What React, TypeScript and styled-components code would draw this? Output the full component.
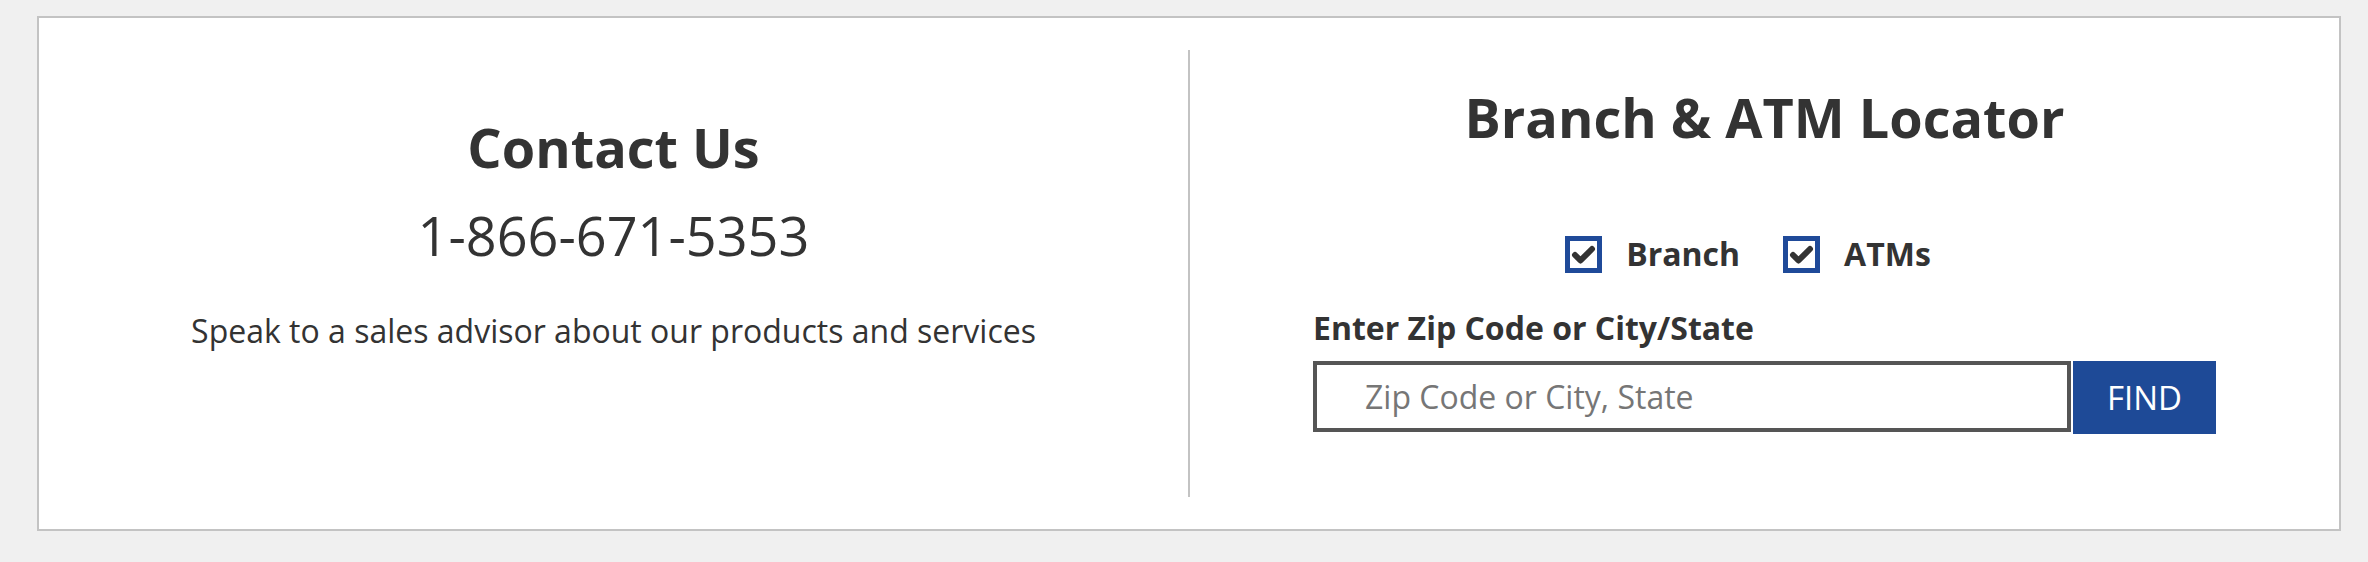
import React from 'react';
import styled, { createGlobalStyle } from 'styled-components';

const GlobalStyle = createGlobalStyle`
  body {
    margin: 0;
    background: #f0f0f0;
    font-family: 'Open Sans', 'Liberation Sans', sans-serif;
    color: #333;
  }
`;

const Page = styled.div`
  padding: 16px 27px 0 37px;
`;

const Card = styled.section`
  display: grid;
  grid-template-columns: 1fr 2px 1fr;
  height: 515px;
  box-sizing: border-box;
  padding: 32px 0;
  background: #fff;
  border: 2px solid #c3c3c3;
`;

const Divider = styled.div`
  background: #c3c3c3;
`;

const Column = styled.div<{ $top: number }>`
  display: flex;
  flex-direction: column;
  align-items: center;
  padding-top: ${(p) => p.$top}px;
  text-align: center;
`;

const Heading = styled.h2`
  margin: 0;
  font-size: 54px;
  line-height: 66px;
  font-weight: 700;
  color: #333;
`;

const Phone = styled.div`
  margin-top: 23px;
  font-size: 54px;
  line-height: 64px;
  font-weight: 400;
`;

const Blurb = styled.p`
  margin: 45px 0 0;
  font-size: 32px;
  line-height: 38px;
`;

const CheckRow = styled.div`
  display: flex;
  gap: 43px;
  margin-top: 85px;
  padding-right: 33px;
`;

const CheckItem = styled.label`
  display: flex;
  align-items: center;
  gap: 24px;
  font-size: 32px;
  line-height: 38px;
  font-weight: 700;
`;

const Box = styled.span`
  display: flex;
  align-items: center;
  justify-content: center;
  width: 37px;
  height: 37px;
  box-sizing: border-box;
  border: 5px solid #1f4a99;
  background: #fff;
`;

const Form = styled.form`
  width: 903px;
  margin-top: 37px;
  text-align: left;
`;

const FieldLabel = styled.div`
  font-size: 32px;
  line-height: 36px;
  font-weight: 700;
`;

const FieldRow = styled.div`
  display: flex;
  align-items: flex-start;
  gap: 2px;
  margin-top: 15px;
`;

const Input = styled.input`
  width: 758px;
  height: 71px;
  box-sizing: border-box;
  padding: 0 0 0 48px;
  border: 4px solid #555;
  font-family: inherit;
  font-size: 32px;
  color: #333;
  outline: none;

  &::placeholder {
    color: #767676;
  }
`;

const FindButton = styled.button`
  width: 143px;
  height: 73px;
  border: none;
  background: #1e4a97;
  color: #fff;
  font-family: inherit;
  font-size: 33px;
  cursor: pointer;
`;

const Check = () => (
  <svg width="25" height="21" viewBox="0 0 25 21">
    <polyline
      points="4,11 9.5,16.5 21,5"
      fill="none"
      stroke="#333"
      strokeWidth="6"
      strokeLinecap="round"
      strokeLinejoin="round"
    />
  </svg>
);

const Checkbox = ({ label }: { label: string }) => (
  <CheckItem>
    <Box>
      <Check />
    </Box>
    {label}
  </CheckItem>
);

export default function App() {
  return (
    <Page>
      <GlobalStyle />
      <Card>
        <Column $top={64}>
          <Heading>Contact Us</Heading>
          <Phone>1-866-671-5353</Phone>
          <Blurb>Speak to a sales advisor about our products and services</Blurb>
        </Column>
        <Divider />
        <Column $top={34}>
          <Heading>Branch &amp; ATM Locator</Heading>
          <CheckRow>
            <Checkbox label="Branch" />
            <Checkbox label="ATMs" />
          </CheckRow>
          <Form onSubmit={(e) => e.preventDefault()}>
            <FieldLabel>Enter Zip Code or City/State</FieldLabel>
            <FieldRow>
              <Input placeholder="Zip Code or City, State" />
              <FindButton type="submit">FIND</FindButton>
            </FieldRow>
          </Form>
        </Column>
      </Card>
    </Page>
  );
}
